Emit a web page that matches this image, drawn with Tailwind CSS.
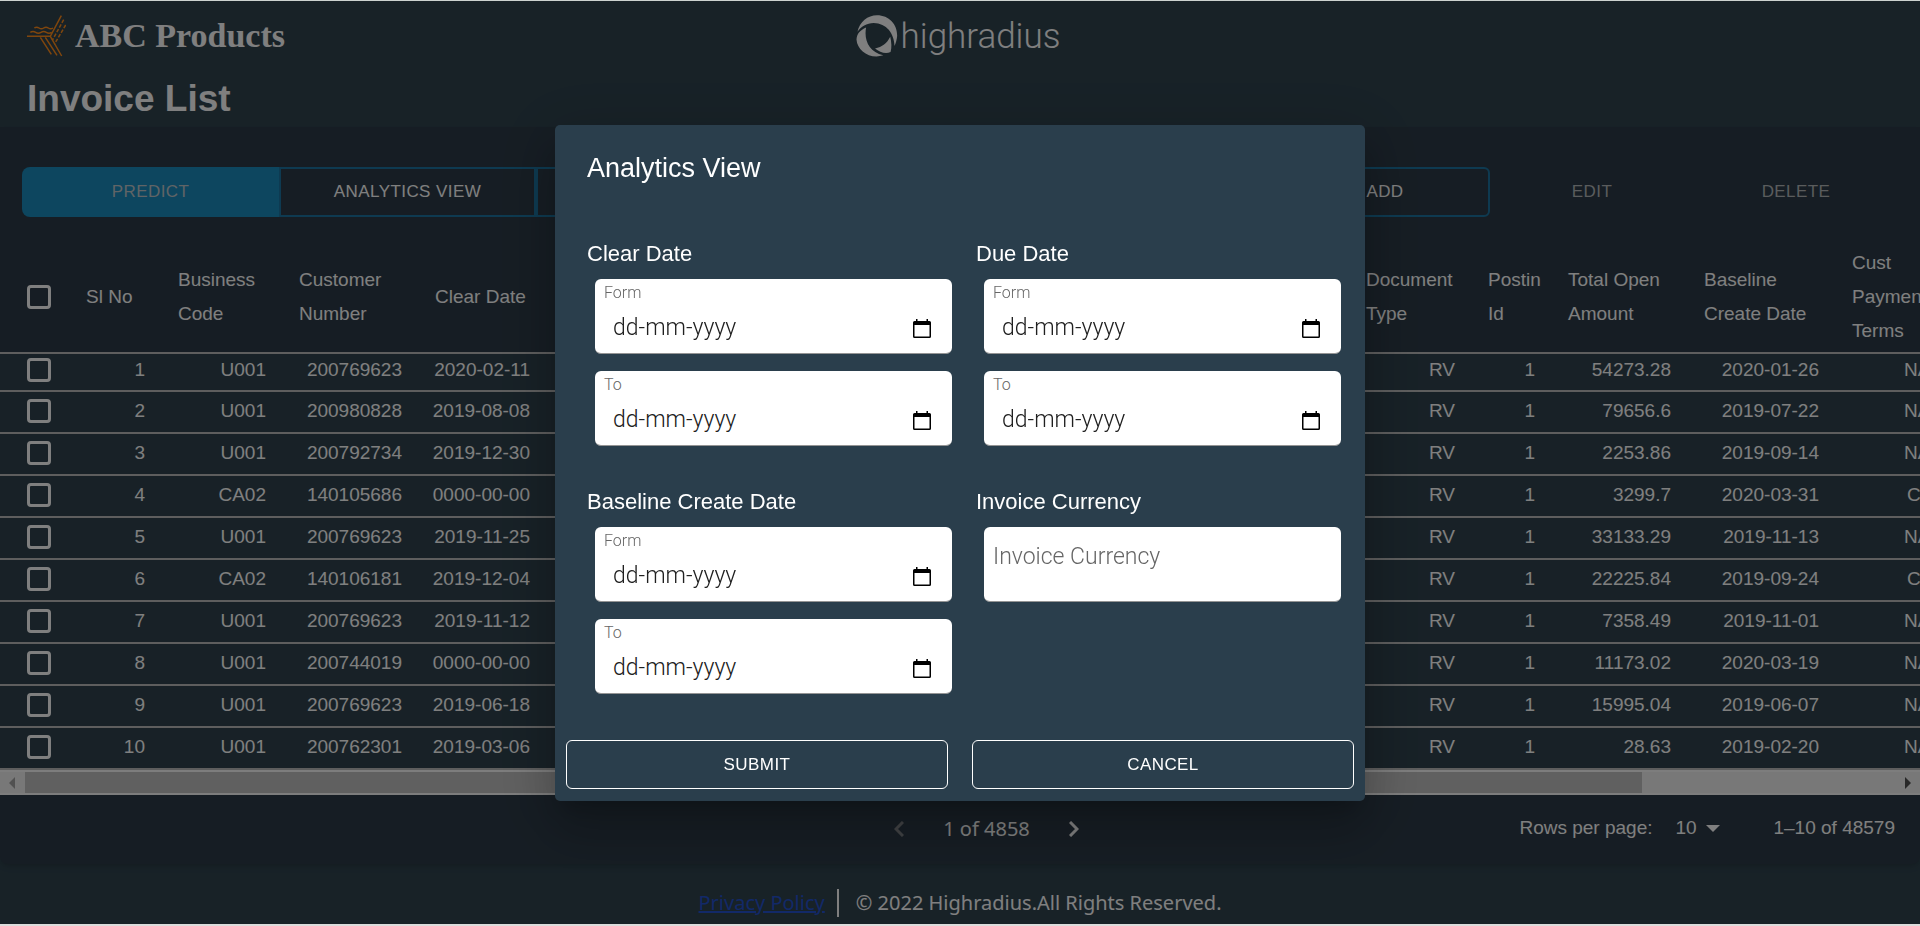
<!DOCTYPE html>
<html lang="en">
<head>
<meta charset="utf-8">
<title>Invoice List</title>
<script src="https://cdn.jsdelivr.net/npm/@tailwindcss/browser@4"></script>
</head>
<body class="flex min-h-screen flex-col overflow-hidden bg-[#30444f] font-['Liberation_Sans',Arial,sans-serif] text-white">
<div class="relative z-20 h-px bg-[#ccd2cf]"></div>

<header class="flex h-[126px] flex-col px-[27px] pt-[7px]">
  <div class="grid grid-cols-[1fr_auto_1fr] items-center">
    <div class="flex items-center gap-[9px]">
      <svg class="h-[42px] w-[39px]" viewBox="80 41 117 124" fill="none" stroke="#ff8c1a" stroke-width="4.5" aria-hidden="true">
        <path d="M80 104H150L183 42M150 104L184 163M135 107L170 161M120 107L153 158"/>
        <path d="M102 79q7-5 14 0t14 0t14 0t14 0M90 92q8-5 16 0t16 0t16 0t16 0"/>
        <path stroke-dasharray="11 5" d="M190 54L156 116M196 70L162 128"/>
      </svg>
      <span class="font-['Liberation_Serif','Times_New_Roman',serif] text-[34px] leading-[54px] font-bold">ABC Products</span>
    </div>
    <div class="flex items-center gap-[3px] pr-[4px]">
      <svg class="h-[42px] w-[42px]" viewBox="107 41 126 127" fill="#fff" aria-hidden="true">
        <path d="M111 92C117 62 142 42 170 42C206 42 232 70 231 104C230 116 227 126 223 135C222 96 199 66 160 65C139 65 121 76 111 92Z"/>
        <path d="M137 79C130 116 145 152 189 163C149 176 110 149 108 115C109 98 119 87 137 79Z"/>
        <path d="M210 107C214 125 215 140 211 153C195 160 178 153 164 142C186 138 200 127 210 107Z"/>
      </svg>
      <span class="pt-[2px] font-[Roboto,sans-serif] text-[35px] leading-[54px] font-light">highradius</span>
    </div>
    <div></div>
  </div>
  <h1 class="mt-[13px] text-[37px] leading-[44px] font-bold">Invoice List</h1>
</header>

<main class="rounded-b-lg bg-[#2d3b48] shadow-md">
  <div class="flex h-[114px] items-center px-[22px] pt-[16px] text-[17px] tracking-wide">
    <div class="flex h-[50px] flex-1">
      <button class="w-[257px] rounded-l-lg bg-[#1a8cbe] text-[#c0c8cc]">PREDICT</button>
      <button class="w-[257px] border-2 border-[#1c75a2]">ANALYTICS VIEW</button>
      <button class="flex-1 border-2 border-[#1c75a2]" aria-label="Advance Search"></button>
    </div>
    <button class="h-[50px] w-[210px] rounded-md border-2 border-[#1c75a2]">ADD</button>
    <button class="h-[50px] w-[204px] text-[#b4b8bb]">EDIT</button>
    <button class="h-[50px] w-[204px] text-[#b4b8bb]">DELETE</button>
  </div>

  <div class="overflow-hidden">
    <table class="w-full table-fixed border-collapse text-[19px]">
      <colgroup>
        <col class="w-[70px]"><col class="w-[92px]"><col class="w-[121px]"><col class="w-[136px]"><col class="w-[128px]">
        <col>
        <col class="w-[122px]"><col class="w-[80px]"><col class="w-[136px]"><col class="w-[148px]"><col class="w-[84px]">
      </colgroup>
      <thead>
        <tr class="h-[112px] border-b-2 border-[#bcbcbc] text-left leading-[34px]">
          <th class="pl-[27px]"><input type="checkbox" aria-label="Select all rows" class="block size-6 appearance-none rounded-[4px] border-[3px] border-white"></th>
          <th class="px-[16px] font-normal">Sl No</th>
          <th class="px-[16px] font-normal">Business Code</th>
          <th class="px-[16px] font-normal">Customer Number</th>
          <th class="pl-[16px] font-normal">Clear Date</th>
          <td></td>
          <th class="pl-[16px] font-normal">Document Type</th>
          <th class="pl-[16px] font-normal">Postin<br>Id</th>
          <th class="px-[16px] font-normal">Total Open Amount</th>
          <th class="px-[16px] font-normal">Baseline Create Date</th>
          <th class="pl-[16px] font-normal">Cust Payment Terms</th>
        </tr>
      </thead>
      <tbody id="rows" class="bg-[#30434e] text-right"></tbody>
    </table>
  </div>
  <div class="flex h-[25px] items-center border-y-2 border-[#fafafa] bg-[#f1f1f1]" aria-hidden="true">
    <svg class="w-[25px]" height="12" viewBox="0 0 25 12"><path d="M15 0v12L9 6z" fill="#a3a3a3"/></svg>
    <div class="flex flex-1 self-stretch"><div class="w-[86%] bg-[#c1c1c1]"></div></div>
    <svg class="w-[15px]" height="12" viewBox="0 0 15 12"><path d="M0 0v12l6-6z" fill="#505050"/></svg>
  </div>

  <div class="grid h-[69px] grid-cols-[1fr_auto_1fr] items-center pr-[25px] pb-[2px] pl-[78px]">
    <div></div>
    <nav class="flex items-center font-['Noto_Sans',sans-serif] text-[20px]" aria-label="Pages">
      <button aria-label="Previous page" class="text-[#808488]"><svg width="10" height="16" viewBox="0 0 10 16" fill="none" stroke="currentColor" stroke-width="3"><path d="M9 1L2 8l7 7"/></svg></button>
      <span class="px-[39px]">1 of 4858</span>
      <button aria-label="Next page"><svg width="10" height="16" viewBox="0 0 10 16" fill="none" stroke="currentColor" stroke-width="3"><path d="M1 1l7 7-7 7"/></svg></button>
    </nav>
    <div class="flex items-center justify-end text-[19px]">
      <label for="per-page">Rows per page:</label>
      <span class="ml-[23px] flex items-center">
        <select id="per-page" class="w-[31px] appearance-none"><option>10</option></select>
        <svg width="14" height="7" viewBox="0 0 14 7"><path d="M0 0h14L7 7z" fill="#fff"/></svg>
      </span>
      <span class="ml-[53px]">1–10 of 48579</span>
    </div>
  </div>
</main>

<footer class="flex flex-1 items-center justify-center pt-[18px] font-['Noto_Sans',sans-serif] text-[20px]">
  <a href="#" class="text-[#2452d0] underline">Privacy Policy</a>
  <span class="mx-[12px] h-[28px] w-[2px] bg-white"></span>
  <span class="pl-[5px]">© 2022 Highradius.All Rights Reserved.</span>
</footer>
<div class="relative z-20 h-[2px] bg-[#dcdcdc]"></div>

<div class="fixed inset-0 z-10 flex items-center justify-center bg-black/50">
  <form role="dialog" aria-labelledby="dialog-title" class="w-[810px] rounded-[5px] bg-[#2a3e4c] pb-[12px] shadow-[0_14px_19px_-9px_rgba(0,0,0,0.2),0_30px_48px_4px_rgba(0,0,0,0.14),0_11px_58px_10px_rgba(0,0,0,0.12)]">
    <h2 id="dialog-title" class="mb-[50px] px-[32px] pt-[23px] text-[27px] leading-[40px]">Analytics View</h2>
    <div id="fields" class="grid grid-cols-2 gap-x-[24px] gap-y-[40px] pr-[24px] pl-[32px]"></div>
    <div class="mt-[46px] grid grid-cols-2 gap-[24px] px-[11px] text-[17px] tracking-wide">
      <button type="button" class="h-[49px] rounded-md border border-white">SUBMIT</button>
      <button type="button" class="h-[49px] rounded-md border border-white">CANCEL</button>
    </div>
  </form>
</div>

<script>
const rows = [
  ['1','U001','200769623','2020-02-11','54273.28','2020-01-26','NAH4'],
  ['2','U001','200980828','2019-08-08','79656.6','2019-07-22','NAH4'],
  ['3','U001','200792734','2019-12-30','2253.86','2019-09-14','NAH4'],
  ['4','CA02','140105686','0000-00-00','3299.7','2020-03-31','CA10'],
  ['5','U001','200769623','2019-11-25','33133.29','2019-11-13','NAH4'],
  ['6','CA02','140106181','2019-12-04','22225.84','2019-09-24','CA10'],
  ['7','U001','200769623','2019-11-12','7358.49','2019-11-01','NAH4'],
  ['8','U001','200744019','0000-00-00','11173.02','2020-03-19','NAH4'],
  ['9','U001','200769623','2019-06-18','15995.04','2019-06-07','NAH4'],
  ['10','U001','200762301','2019-03-06','28.63','2019-02-20','NAH4'],
];
document.getElementById('rows').innerHTML = rows.map((r, i) => {
  const cell = v => `<td class="pr-[17px] ${i ? 'pb-[2px]' : ''}">${v}</td>`;
  return `<tr class="${i ? 'h-[42px]' : 'h-[38px] align-top leading-[32px]'} border-b-2 border-[#bcbcbc]">
    <td class="pl-[27px] ${i ? 'pb-[2px]' : 'pt-[4px]'}"><input type="checkbox" aria-label="Select row ${r[0]}" class="block size-6 appearance-none rounded-[4px] border-[3px] border-white"></td>
    ${cell(r[0])}${cell(r[1])}${cell(r[2])}${cell(r[3])}<td></td>${cell('RV')}${cell('1')}${cell(r[4])}${cell(r[5])}
    <td class="${r[6] === 'CA10' ? 'pl-[71px]' : 'pl-[68px]'} ${i ? 'pb-[2px]' : ''} text-left whitespace-nowrap">${r[6]}</td></tr>`;
}).join('');

const dateField = (group, name) => {
  const id = (group + '-' + name).toLowerCase().replace(/ /g, '-');
  return `<div class="flex h-[75px] flex-col rounded-[6px] border-b border-[#949494] bg-white pl-[9px] pr-[21px]">
    <label for="${id}" class="text-[16px] leading-[27px] text-[#666]">${name}</label>
    <div class="flex h-[45px] items-center pl-[9px]">
      <input id="${id}" type="text" placeholder="dd-mm-yyyy" class="min-w-0 flex-1 text-[23px] placeholder:text-[#202020] outline-none">
      <button type="button" aria-label="Open calendar"><svg width="18" height="20" viewBox="0 0 18 20"><path fill="#000" fill-rule="evenodd" d="M3 0h1.500v2h9V0H15v2h1.500a1.500 1.500 0 0 1 1.500 1.500v14A1.500 1.500 0 0 1 16.500 19h-15A1.500 1.500 0 0 1 0 17.500v-14A1.500 1.500 0 0 1 1.500 2H3zM1.500 6v11.500h15V6z"/></svg></button>
    </div></div>`;
};
const section = (title, body) => `<section><h3 class="mb-[9px] text-[22px] leading-[32px]">${title}</h3>
  <div class="flex flex-col gap-[17px] pl-[8px] font-[Roboto,sans-serif] font-light">${body}</div></section>`;
const dates = t => section(t, dateField(t, 'Form') + dateField(t, 'To'));
document.getElementById('fields').innerHTML = dates('Clear Date') + dates('Due Date') + dates('Baseline Create Date') +
  section('Invoice Currency', `<input aria-label="Invoice Currency" type="text" placeholder="Invoice Currency" class="h-[75px] rounded-[6px] border-b border-[#949494] bg-white pt-[2px] pb-[18px] pl-[9px] text-[23px] text-black placeholder:text-[#666]">`);
</script>
</body>
</html>
